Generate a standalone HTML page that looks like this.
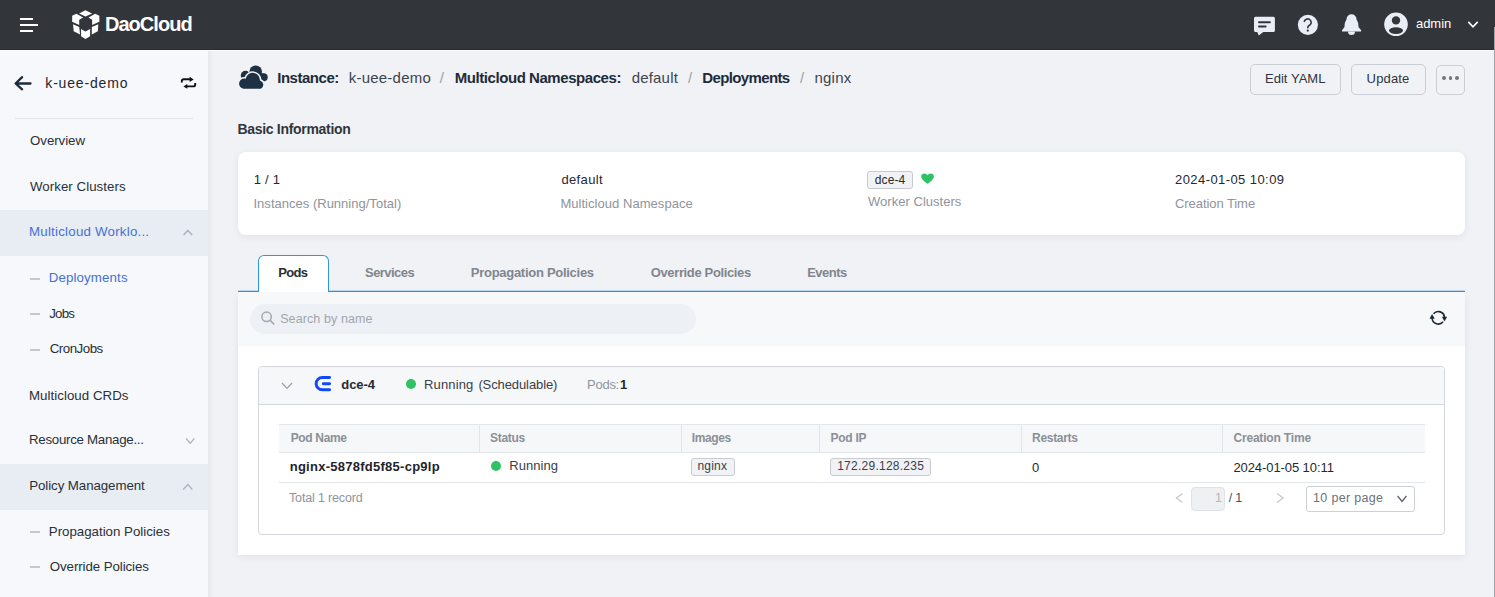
<!DOCTYPE html>
<html><head><meta charset="utf-8">
<style>
*{box-sizing:border-box;margin:0;padding:0}
html,body{width:1495px;height:597px;overflow:hidden;background:#f1f2f6;font-family:"Liberation Sans",sans-serif}
.a{position:absolute}
.t{position:absolute;white-space:nowrap}
svg{position:absolute;overflow:visible}
</style></head><body>
<!-- header -->
<div class="a" style="left:0;top:0;width:1495px;height:50px;background:#32353a"></div>
<div class="a" style="left:0;top:49px;width:1495px;height:1px;background:#2a2c31"></div>
<div class="a" style="left:0;top:50px;width:1495px;height:1px;background:#fbfbfd"></div>
<div class="a" style="left:20px;top:18px;width:13px;height:2px;background:#fff"></div>
<div class="a" style="left:20px;top:24px;width:18px;height:2px;background:#fff"></div>
<div class="a" style="left:20px;top:30px;width:13px;height:2px;background:#fff"></div>
<svg style="left:66px;top:5px" width="40" height="40" viewBox="0 0 597 597">
  <g fill="#ffffff">
    <path d="M195 125 L290 78 L390 125 L290 172 Z"/>
    <path d="M92 162 L155 132 L255 185 L197 222 L197 298 L92 250 Z"/>
    <path d="M498 162 L435 132 L335 185 L390 222 L390 298 L498 250 Z"/>
    <path d="M105 287 L197 330 L210 442 L115 392 Z"/>
    <path d="M385 330 L482 287 L475 392 L385 442 Z"/>
    <path d="M225 357 L290 397 L360 357 L360 467 L290 507 L225 467 Z"/>
  </g>
</svg>
<!-- chat -->
<svg style="left:1250px;top:10px" width="30" height="30" viewBox="0 0 30 30">
  <path d="M5.5 6.8 H23.4 A1.5 1.5 0 0 1 24.9 8.3 V20.4 A1.5 1.5 0 0 1 23.4 21.9 H13.3 L8.8 25.6 L7.2 21.9 H5.5 A1.5 1.5 0 0 1 4 20.4 V8.3 A1.5 1.5 0 0 1 5.5 6.8 Z" fill="#e9edf5"/>
  <rect x="8" y="11.2" width="12.9" height="2" rx="1" fill="#32353a"/>
  <rect x="8" y="15.6" width="8.6" height="2" rx="1" fill="#32353a"/>
</svg>
<!-- help -->
<svg style="left:0;top:0" width="1" height="1">
  <circle cx="1307.9" cy="24.8" r="10.1" fill="#e9edf5"/>
  <path d="M1304.3 21.35 A3.5 3.5 0 1 1 1310.2 24.8 Q1307.8 25.9 1307.8 27.4 V27.8" stroke="#32353a" stroke-width="1.6" fill="none" stroke-linecap="round"/>
  <circle cx="1307.8" cy="30.6" r="1.15" fill="#32353a"/>
</svg>
<!-- bell -->
<svg style="left:0;top:0" width="1" height="1">
  <path d="M1346.5 19.3 A5 5 0 0 1 1356.5 19.3 Q1358.4 22 1358.6 27.3 L1361.1 30.2 V31.6 H1342 V30.2 L1344.4 27.3 Q1344.6 22 1346.5 19.3 Z" fill="#e9edf5"/>
  <path d="M1348 31.6 H1355 A3.5 3.5 0 0 1 1348 31.6 Z" fill="#e9edf5"/>
</svg>
<!-- avatar -->
<svg style="left:1375px;top:5px" width="40" height="40" viewBox="0 0 40 40">
  <circle cx="21" cy="19.3" r="11.8" fill="#e9edf5"/>
  <circle cx="21" cy="15.4" r="4.2" fill="#32353a"/>
  <ellipse cx="21" cy="25.6" rx="7" ry="3.3" fill="#32353a"/>
</svg>
<svg style="left:1465px;top:18px" width="16" height="12" viewBox="0 0 16 12">
  <path d="M3.3 3.9 L8 8.9 L12.7 3.9" stroke="#fff" stroke-width="1.6" fill="none"/>
</svg>
<div class="a" style="left:1494px;top:27px;width:1px;height:570px;background:#9fa1a6"></div>

<!-- sidebar -->
<div class="a" style="left:0;top:51px;width:208px;height:546px;background:#f6f8fb"></div>
<div class="a" style="left:208px;top:51px;width:6px;height:546px;background:linear-gradient(to right,rgba(0,0,20,0.045),rgba(0,0,20,0))"></div>
<svg style="left:10px;top:72px" width="28" height="24" viewBox="0 0 28 24">
  <path d="M20.5 11.5 H6 M12.1 5.2 L5.6 11.5 L12.1 17.3" stroke="#1c2b3d" stroke-width="2.3" fill="none" stroke-linecap="round" stroke-linejoin="round"/>
</svg>
<svg style="left:176px;top:72px" width="26" height="22" viewBox="0 0 26 22">
  <path d="M5.8 10.6 V9.2 Q5.8 7.2 7.8 7.2 H14.2" stroke="#111" stroke-width="1.9" fill="none"/>
  <path d="M13.6 4.8 L17.7 7.4 L13.6 9.9 Z" fill="#111"/>
  <path d="M19.2 11 V12.4 Q19.2 14.4 17.2 14.4 H10.7" stroke="#111" stroke-width="1.9" fill="none"/>
  <path d="M11.3 12.1 L7.4 14.4 L11.3 16.8 Z" fill="#111"/>
</svg>
<div class="a" style="left:15px;top:118px;width:178px;height:1px;background:#e1e4e9"></div>
<div class="a" style="left:0;top:210px;width:208px;height:46px;background:#e8edf4"></div>
<div class="a" style="left:0;top:464px;width:208px;height:46px;background:#e8edf4"></div>
<div class="a" style="left:30px;top:278px;width:10px;height:2px;background:#c4c8cf"></div>
<div class="a" style="left:30px;top:313px;width:10px;height:2px;background:#c4c8cf"></div>
<div class="a" style="left:30px;top:349px;width:10px;height:2px;background:#c4c8cf"></div>
<div class="a" style="left:30px;top:531px;width:10px;height:2px;background:#c4c8cf"></div>
<div class="a" style="left:30px;top:566px;width:10px;height:2px;background:#c4c8cf"></div>
<svg style="left:0;top:0" width="1" height="1">
  <path d="M183.6 235 L187.9 230.5 L192.2 235" stroke="#a7aeb8" stroke-width="1.3" fill="none"/>
  <path d="M186 438.3 L190.2 443.3 L194.4 438.3" stroke="#a7aeb8" stroke-width="1.3" fill="none"/>
  <path d="M183.2 489.6 L187.8 484.4 L192.4 489.6" stroke="#a7aeb8" stroke-width="1.3" fill="none"/>
</svg>

<!-- breadcrumb icon -->
<svg style="left:234px;top:60px" width="40" height="35" viewBox="0 0 682 597">
  <g fill="#1e3044">
    <circle cx="370" cy="200" r="108"/>
    <circle cx="505" cy="295" r="70"/>
    <rect x="370" y="230" width="140" height="135"/>
    <circle cx="195" cy="265" r="80"/>
  </g>
  <path d="M160 505 H425 A85 85 0 0 0 455 340 A135 135 0 0 0 190 305 A100 100 0 0 0 160 505 Z" fill="#1e3044" stroke="#f1f2f6" stroke-width="26"/>
</svg>

<!-- buttons -->
<div class="a" style="left:1250px;top:64px;width:91px;height:31px;border:1px solid #c9cdd4;border-radius:5px"></div>
<div class="a" style="left:1351px;top:64px;width:75px;height:31px;border:1px solid #c9cdd4;border-radius:5px"></div>
<div class="a" style="left:1436px;top:65px;width:29px;height:30px;border:1px solid #c9cdd4;border-radius:5px"></div>
<div class="a" style="left:1442.25px;top:76.2px;width:3.5px;height:3.5px;border-radius:2px;background:#6f757e"></div>
<div class="a" style="left:1448.75px;top:76.2px;width:3.5px;height:3.5px;border-radius:2px;background:#6f757e"></div>
<div class="a" style="left:1455.25px;top:76.2px;width:3.5px;height:3.5px;border-radius:2px;background:#6f757e"></div>

<!-- card -->
<div class="a" style="left:238px;top:152px;width:1227px;height:83px;background:#fff;border-radius:8px;box-shadow:0 2px 8px rgba(20,30,50,0.07)"></div>
<div class="a" style="left:867px;top:171px;width:46px;height:18px;border:1px solid #c8cbd2;border-radius:3px;background:#f1f2f5"></div>
<svg style="left:920px;top:172px" width="16" height="14" viewBox="0 0 16 14">
  <path d="M7.55 11.8 C4 9 1.2 7 1.2 4.4 C1.2 2.6 2.6 1.4 4.3 1.4 C5.7 1.4 6.9 2.2 7.55 3.3 C8.2 2.2 9.4 1.4 10.8 1.4 C12.5 1.4 13.9 2.6 13.9 4.4 C13.9 7 11.1 9 7.55 11.8 Z" fill="#2fc264"/>
</svg>

<!-- tabs & panel -->
<div class="a" style="left:238px;top:292px;width:1227px;height:263px;background:#fff;box-shadow:0 2px 8px rgba(20,30,50,0.07)"></div>
<div class="a" style="left:238px;top:292px;width:1227px;height:53.5px;background:#f7f8fa"></div>
<div class="a" style="left:238px;top:291px;width:1227px;height:1px;background:#2a93e1"></div><div class="a" style="left:238px;top:290px;width:1227px;height:1px;background:rgba(42,147,225,0.25)"></div>
<div class="a" style="left:258px;top:255px;width:71px;height:37px;background:#fff;border:1.5px solid #2f96e1;border-bottom:none;border-radius:6px 6px 0 0"></div>
<div class="a" style="left:259.5px;top:290px;width:68px;height:2px;background:#fff"></div>
<div class="a" style="left:250px;top:304px;width:446px;height:30px;border-radius:15px;background:#edf0f4"></div>
<svg style="left:0;top:0" width="1" height="1">
  <circle cx="266.6" cy="316.8" r="4.7" stroke="#a3a8b0" stroke-width="1.5" fill="none"/>
  <path d="M270.2 320.4 L273.8 324" stroke="#a3a8b0" stroke-width="1.6" stroke-linecap="round"/>
</svg>
<svg style="left:0;top:0" width="1" height="1">
  <path d="M1433.55 313.8 A6.2 6.2 0 0 1 1444.5 317.4" stroke="#1c2838" stroke-width="1.6" fill="none"/>
  <path d="M1441.9 316.8 L1447.1 316.8 L1444.5 321.6 Z" fill="#1c2838"/>
  <path d="M1443.05 321.8 A6.2 6.2 0 0 1 1432.1 318.2" stroke="#1c2838" stroke-width="1.6" fill="none"/>
  <path d="M1429.5 318.8 L1434.7 318.8 L1432.1 314 Z" fill="#1c2838"/>
</svg>

<!-- cluster box -->
<div class="a" style="left:258px;top:366px;width:1187px;height:169px;border:1px solid #d3d6dc;border-radius:4px;background:#fff"></div>
<div class="a" style="left:259px;top:367px;width:1185px;height:38px;background:#f6f7f9;border-bottom:1px solid #d3d6dc;border-radius:3px 3px 0 0"></div>
<svg style="left:0;top:0" width="1" height="1">
  <path d="M282 383 L287 388.4 L292 383" stroke="#9ba1a9" stroke-width="1.3" fill="none"/>
  <path d="M329.6 377.5 H322.3 A6.15 6.15 0 0 0 322.3 389.8 H329.6 M323.3 383.7 H329.6" stroke="#1249f5" stroke-width="2.9" fill="none" stroke-linecap="round"/>
</svg>
<div class="a" style="left:406.2px;top:378.8px;width:10px;height:10px;border-radius:5px;background:#2fc264"></div>

<!-- table -->
<div class="a" style="left:279px;top:424px;width:1146px;height:29px;background:#f6f7f9;border-top:1px solid #e2e5e9;border-bottom:1px solid #e2e5e9"></div>
<div class="a" style="left:479px;top:425px;width:1px;height:27px;background:#e2e5e9"></div>
<div class="a" style="left:681px;top:425px;width:1px;height:27px;background:#e2e5e9"></div>
<div class="a" style="left:819px;top:425px;width:1px;height:27px;background:#e2e5e9"></div>
<div class="a" style="left:1021px;top:425px;width:1px;height:27px;background:#e2e5e9"></div>
<div class="a" style="left:1222px;top:425px;width:1px;height:27px;background:#e2e5e9"></div>
<div class="a" style="left:279px;top:482px;width:1146px;height:1px;background:#e2e5e9"></div>
<div class="a" style="left:491px;top:460.8px;width:10px;height:10px;border-radius:5px;background:#2fc264"></div>
<div class="a" style="left:691px;top:458px;width:44px;height:18px;border:1px solid #c8cbd2;border-radius:3px;background:#f1f2f5"></div>
<div class="a" style="left:830px;top:458px;width:101px;height:18px;border:1px solid #c8cbd2;border-radius:3px;background:#f1f2f5"></div>
<svg style="left:0;top:0" width="1" height="1">
  <path d="M1182.6 493.6 L1176.4 498 L1182.6 502.4" stroke="#c3c7cd" stroke-width="1.2" fill="none"/>
  <path d="M1277 493.6 L1283.2 498 L1277 502.4" stroke="#c3c7cd" stroke-width="1.2" fill="none"/>
</svg>
<div class="a" style="left:1191px;top:487px;width:34px;height:24px;border:1px solid #dfe2e6;border-radius:4px;background:#eff0f2"></div>
<div class="a" style="left:1306px;top:486px;width:109px;height:26px;border:1px solid #cdd1d7;border-radius:3px;background:#fff"></div>

<svg style="left:0;top:0" width="1" height="1">
  <path d="M1397.6 496 L1402 501.4 L1406.4 496" stroke="#5b626b" stroke-width="1.3" fill="none"/>
</svg>
<div class="t" style="left:105.00px;top:13.77px;font-size:20px;line-height:20px;font-weight:bold;color:#ffffff;letter-spacing:-0.971px">DaoCloud</div>
<div class="t" style="left:1416.00px;top:16.90px;font-size:13px;line-height:13px;font-weight:normal;color:#ffffff;letter-spacing:-0.050px">admin</div>
<div class="t" style="left:45.30px;top:76.15px;font-size:14px;line-height:14px;font-weight:normal;color:#1f2731;letter-spacing:0.833px">k-uee-demo</div>
<div class="t" style="left:30.00px;top:134.24px;font-size:13.3px;line-height:13.3px;font-weight:normal;color:#2a2f38;letter-spacing:-0.057px">Overview</div>
<div class="t" style="left:30.00px;top:180.14px;font-size:13.3px;line-height:13.3px;font-weight:normal;color:#2a2f38;letter-spacing:0.036px">Worker Clusters</div>
<div class="t" style="left:29.00px;top:225.44px;font-size:13.3px;line-height:13.3px;font-weight:normal;color:#4470d6;letter-spacing:0.226px">Multicloud Worklo...</div>
<div class="t" style="left:48.70px;top:271.24px;font-size:13.3px;line-height:13.3px;font-weight:normal;color:#4470d6;letter-spacing:0.130px">Deployments</div>
<div class="t" style="left:49.20px;top:306.54px;font-size:13.3px;line-height:13.3px;font-weight:normal;color:#2a2f38;letter-spacing:-0.800px">Jobs</div>
<div class="t" style="left:49.70px;top:342.14px;font-size:13.3px;line-height:13.3px;font-weight:normal;color:#2a2f38;letter-spacing:-0.486px">CronJobs</div>
<div class="t" style="left:29.00px;top:388.54px;font-size:13.3px;line-height:13.3px;font-weight:normal;color:#2a2f38;letter-spacing:0.029px">Multicloud CRDs</div>
<div class="t" style="left:29.00px;top:433.34px;font-size:13.3px;line-height:13.3px;font-weight:normal;color:#2a2f38;letter-spacing:-0.282px">Resource Manage...</div>
<div class="t" style="left:29.20px;top:479.24px;font-size:13.3px;line-height:13.3px;font-weight:normal;color:#2a2f38;letter-spacing:-0.075px">Policy Management</div>
<div class="t" style="left:48.80px;top:525.14px;font-size:13.3px;line-height:13.3px;font-weight:normal;color:#2a2f38;letter-spacing:-0.011px">Propagation Policies</div>
<div class="t" style="left:49.80px;top:560.04px;font-size:13.3px;line-height:13.3px;font-weight:normal;color:#2a2f38;letter-spacing:-0.087px">Override Policies</div>
<div class="t" style="left:277.20px;top:70.30px;font-size:15px;line-height:15px;font-weight:bold;color:#1e2b3a;letter-spacing:-0.475px">Instance:</div>
<div class="t" style="left:348.80px;top:70.30px;font-size:15px;line-height:15px;font-weight:normal;color:#3c444e;letter-spacing:0.211px">k-uee-demo</div>
<div class="t" style="left:439.70px;top:70.30px;font-size:15px;line-height:15px;font-weight:normal;color:#9aa0a8;letter-spacing:0.000px">/</div>
<div class="t" style="left:454.80px;top:70.30px;font-size:15px;line-height:15px;font-weight:bold;color:#1e2b3a;letter-spacing:-0.443px">Multicloud Namespaces:</div>
<div class="t" style="left:631.70px;top:70.30px;font-size:15px;line-height:15px;font-weight:normal;color:#3c444e;letter-spacing:0.183px">default</div>
<div class="t" style="left:688.00px;top:70.30px;font-size:15px;line-height:15px;font-weight:normal;color:#9aa0a8;letter-spacing:0.000px">/</div>
<div class="t" style="left:702.30px;top:70.30px;font-size:15px;line-height:15px;font-weight:bold;color:#1e2b3a;letter-spacing:-0.630px">Deployments</div>
<div class="t" style="left:800.00px;top:70.30px;font-size:15px;line-height:15px;font-weight:normal;color:#9aa0a8;letter-spacing:0.000px">/</div>
<div class="t" style="left:814.40px;top:70.30px;font-size:15px;line-height:15px;font-weight:normal;color:#3c444e;letter-spacing:0.250px">nginx</div>
<div class="t" style="left:1265.00px;top:71.50px;font-size:13px;line-height:13px;font-weight:normal;color:#2e3540;letter-spacing:0.025px">Edit YAML</div>
<div class="t" style="left:1366.60px;top:71.50px;font-size:13px;line-height:13px;font-weight:normal;color:#2e3540;letter-spacing:0.160px">Update</div>
<div class="t" style="left:237.40px;top:122.45px;font-size:14px;line-height:14px;font-weight:bold;color:#30353d;letter-spacing:-0.300px">Basic Information</div>
<div class="t" style="left:253.80px;top:173.20px;font-size:13px;line-height:13px;font-weight:normal;color:#25292f;letter-spacing:0.225px">1 / 1</div>
<div class="t" style="left:253.50px;top:197.00px;font-size:13px;line-height:13px;font-weight:normal;color:#8e949c;letter-spacing:0.013px">Instances (Running/Total)</div>
<div class="t" style="left:561.40px;top:173.10px;font-size:13px;line-height:13px;font-weight:normal;color:#25292f;letter-spacing:0.367px">default</div>
<div class="t" style="left:560.40px;top:196.80px;font-size:13px;line-height:13px;font-weight:normal;color:#8e949c;letter-spacing:0.042px">Multicloud Namespace</div>
<div class="t" style="left:874.80px;top:174.14px;font-size:12px;line-height:12px;font-weight:normal;color:#25292f;letter-spacing:0.100px">dce-4</div>
<div class="t" style="left:868.00px;top:195.20px;font-size:13px;line-height:13px;font-weight:normal;color:#8e949c;letter-spacing:0.029px">Worker Clusters</div>
<div class="t" style="left:1175.00px;top:173.10px;font-size:13px;line-height:13px;font-weight:normal;color:#25292f;letter-spacing:0.427px">2024-01-05 10:09</div>
<div class="t" style="left:1175.00px;top:196.80px;font-size:13px;line-height:13px;font-weight:normal;color:#8e949c;letter-spacing:-0.067px">Creation Time</div>
<div class="t" style="left:278.20px;top:266.10px;font-size:13px;line-height:13px;font-weight:bold;color:#2a2f36;letter-spacing:-0.667px">Pods</div>
<div class="t" style="left:365.00px;top:266.10px;font-size:13px;line-height:13px;font-weight:bold;color:#80868e;letter-spacing:-0.543px">Services</div>
<div class="t" style="left:470.80px;top:266.10px;font-size:13px;line-height:13px;font-weight:bold;color:#80868e;letter-spacing:-0.279px">Propagation Policies</div>
<div class="t" style="left:650.70px;top:266.10px;font-size:13px;line-height:13px;font-weight:bold;color:#80868e;letter-spacing:-0.356px">Override Policies</div>
<div class="t" style="left:807.20px;top:266.10px;font-size:13px;line-height:13px;font-weight:bold;color:#80868e;letter-spacing:-0.520px">Events</div>
<div class="t" style="left:280.20px;top:312.72px;font-size:12.5px;line-height:12.5px;font-weight:normal;color:#a1a6ae;letter-spacing:0.100px">Search by name</div>
<div class="t" style="left:341.30px;top:377.80px;font-size:13px;line-height:13px;font-weight:bold;color:#25292f;letter-spacing:-0.075px">dce-4</div>
<div class="t" style="left:424.10px;top:377.80px;font-size:13px;line-height:13px;font-weight:normal;color:#3a4048;letter-spacing:0.117px">Running</div>
<div class="t" style="left:478.40px;top:377.80px;font-size:13px;line-height:13px;font-weight:normal;color:#3a4048;letter-spacing:-0.100px">(Schedulable)</div>
<div class="t" style="left:587.10px;top:377.80px;font-size:13px;line-height:13px;font-weight:normal;color:#8e949c;letter-spacing:-0.275px">Pods:</div>
<div class="t" style="left:619.90px;top:377.80px;font-size:13px;line-height:13px;font-weight:bold;color:#25292f;letter-spacing:0.000px">1</div>
<div class="t" style="left:290.70px;top:431.94px;font-size:12px;line-height:12px;font-weight:bold;color:#8b9097;letter-spacing:-0.343px">Pod Name</div>
<div class="t" style="left:490.10px;top:431.94px;font-size:12px;line-height:12px;font-weight:bold;color:#8b9097;letter-spacing:-0.320px">Status</div>
<div class="t" style="left:691.70px;top:431.94px;font-size:12px;line-height:12px;font-weight:bold;color:#8b9097;letter-spacing:-0.380px">Images</div>
<div class="t" style="left:830.60px;top:431.94px;font-size:12px;line-height:12px;font-weight:bold;color:#8b9097;letter-spacing:-0.300px">Pod IP</div>
<div class="t" style="left:1032.10px;top:431.94px;font-size:12px;line-height:12px;font-weight:bold;color:#8b9097;letter-spacing:-0.314px">Restarts</div>
<div class="t" style="left:1233.40px;top:431.94px;font-size:12px;line-height:12px;font-weight:bold;color:#8b9097;letter-spacing:-0.175px">Creation Time</div>
<div class="t" style="left:289.70px;top:459.80px;font-size:13px;line-height:13px;font-weight:bold;color:#1f242b;letter-spacing:0.262px">nginx-5878fd5f85-cp9lp</div>
<div class="t" style="left:509.20px;top:459.20px;font-size:13px;line-height:13px;font-weight:normal;color:#3a4048;letter-spacing:0.067px">Running</div>
<div class="t" style="left:697.50px;top:460.34px;font-size:12px;line-height:12px;font-weight:normal;color:#3a4048;letter-spacing:0.175px">nginx</div>
<div class="t" style="left:837.20px;top:460.34px;font-size:12px;line-height:12px;font-weight:normal;color:#3a4048;letter-spacing:0.254px">172.29.128.235</div>
<div class="t" style="left:1032.00px;top:460.60px;font-size:13px;line-height:13px;font-weight:normal;color:#25292f;letter-spacing:0.000px">0</div>
<div class="t" style="left:1233.40px;top:460.60px;font-size:13px;line-height:13px;font-weight:normal;color:#25292f;letter-spacing:-0.080px">2024-01-05 10:11</div>
<div class="t" style="left:289.00px;top:491.72px;font-size:12.5px;line-height:12.5px;font-weight:normal;color:#8e949c;letter-spacing:-0.162px">Total 1 record</div>
<div class="t" style="left:1215.00px;top:491.92px;font-size:12.5px;line-height:12.5px;font-weight:normal;color:#b0b5bc;letter-spacing:0.000px">1</div>
<div class="t" style="left:1228.80px;top:491.92px;font-size:12.5px;line-height:12.5px;font-weight:normal;color:#4a5058;letter-spacing:-0.300px">/ 1</div>
<div class="t" style="left:1313.10px;top:491.92px;font-size:12.5px;line-height:12.5px;font-weight:normal;color:#6b727b;letter-spacing:0.310px">10 per page</div>
</body></html>
